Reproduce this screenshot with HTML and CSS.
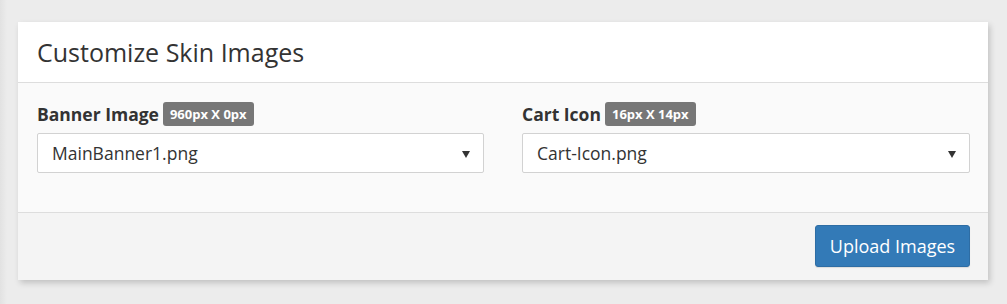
FILE: index.html
```html
<!DOCTYPE html>
<html>
<head>
<meta charset="utf-8">
<link rel="stylesheet" href="styles.css">
</head>
<body>
<div class="page">
  <div class="card">
    <div class="card-header">Customize Skin Images</div>
    <div class="card-body">
      <div class="field">
        <div class="label">Banner Image <span class="badge">960px X 0px</span></div>
        <div class="select"><span>MainBanner1.png</span><span class="caret"></span></div>
      </div>
      <div class="field">
        <div class="label">Cart Icon <span class="badge">16px X 14px</span></div>
        <div class="select"><span>Cart-Icon.png</span><span class="caret"></span></div>
      </div>
    </div>
    <div class="card-footer">
      <button class="btn">Upload Images</button>
    </div>
  </div>
</div>
</body>
</html>
```
FILE: styles.css
```css
html, body {
  margin: 0;
  padding: 0;
}
body {
  background: linear-gradient(to right, #e2e2e2 0px, #ececec 7px, #ececec 100%);
  font-family: "Open Sans", "Noto Sans", sans-serif;
  color: #333;
  width: 1007px;
  height: 304px;
  overflow: hidden;
}
.page {
  padding: 22px 19px 0 18px;
}
.card {
  width: 970px;
  background: #fafafa;
  box-shadow: 2px 3px 6px rgba(0,0,0,0.18);
}
.card-header {
  background: #fff;
  height: 60px;
  border-bottom: 1px solid #dddddd;
  padding: 0 19px;
  font-size: 25px;
  line-height: 60px;
  color: #333;
}
.card-body {
  display: grid;
  grid-template-columns: 447px 448px;
  column-gap: 38px;
  padding: 19px 18px 39px 19px;
  height: 71px;
}
.label {
  font-weight: bold;
  font-size: 17.5px;
  line-height: 24px;
  height: 24px;
  display: flex;
  align-items: center;
  gap: 5px;
  color: #333;
  margin-bottom: 7px;
}
.badge {
  display: inline-block;
  background: #777;
  color: #fff;
  font-size: 13px;
  font-weight: bold;
  line-height: 24px;
  height: 24px;
  padding: 0 7px;
  border-radius: 3px;
  margin-left: -1px;
}
.select {
  height: 38px;
  border: 1px solid #d2d2d2;
  background: #fff;
  border-radius: 2px;
  display: flex;
  align-items: center;
  justify-content: space-between;
  padding: 0 13px 0 14px;
  font-size: 17.5px;
  color: #333;
}
.caret {
  width: 0;
  height: 0;
  border-left: 4px solid transparent;
  border-right: 4px solid transparent;
  border-top: 7px solid #333;
  margin-top: 2px;
}
.card-footer {
  background: #f4f4f4;
  border-top: 1px solid #dddddd;
  height: 68px;
  display: flex;
  justify-content: flex-end;
  align-items: flex-start;
  padding: 12px 18px 0 0;
  box-sizing: border-box;
}
.btn {
  width: 155px;
  height: 42px;
  background: #337ab7;
  border: 1px solid #2e6da4;
  border-radius: 3px;
  color: #fff;
  font-family: "Open Sans", "Noto Sans", sans-serif;
  font-size: 18px;
  padding: 0;
  box-shadow: 0 1px 1px rgba(0,0,0,0.1);
}
```
